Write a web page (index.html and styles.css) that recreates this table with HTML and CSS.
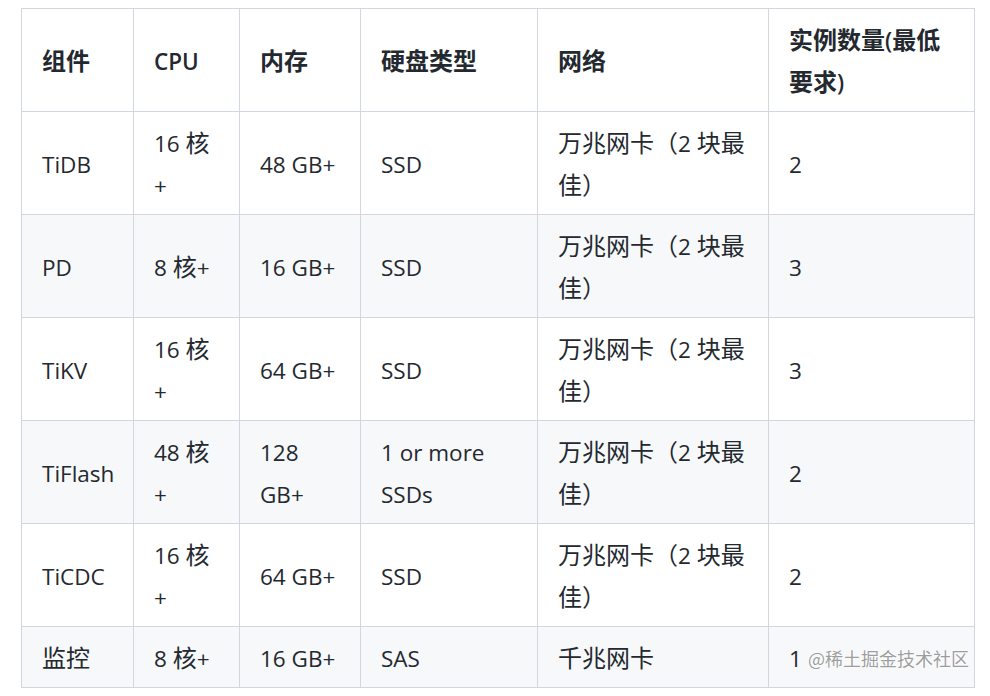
FILE: index.html
```html
<!DOCTYPE html>
<html lang="zh-CN">
<head>
<meta charset="utf-8">
<title>TiDB 硬件配置</title>
<link rel="stylesheet" href="styles.css">
</head>
<body>
<div class="page">
  <table class="spec">
    <colgroup>
      <col class="c1"><col class="c2"><col class="c3"><col class="c4"><col class="c5"><col class="c6">
    </colgroup>
    <thead>
      <tr>
        <th><span class="zh">组件</span></th>
        <th>CPU</th>
        <th><span class="zh">内存</span></th>
        <th><span class="zh">硬盘类型</span></th>
        <th><span class="zh">网络</span></th>
        <th><span class="zh">实例数量</span>(<span class="zh">最低</span><br><span class="zh">要求</span>)</th>
      </tr>
    </thead>
    <tbody>
      <tr><td>TiDB</td><td>16 <span class="zh">核</span><br>+</td><td>48 GB+</td><td>SSD</td><td><span class="zh">万兆网卡（</span>2 <span class="zh">块最</span><br><span class="zh">佳）</span></td><td>2</td></tr>
      <tr><td>PD</td><td>8 <span class="zh">核</span>+</td><td>16 GB+</td><td>SSD</td><td><span class="zh">万兆网卡（</span>2 <span class="zh">块最</span><br><span class="zh">佳）</span></td><td>3</td></tr>
      <tr><td>TiKV</td><td>16 <span class="zh">核</span><br>+</td><td>64 GB+</td><td>SSD</td><td><span class="zh">万兆网卡（</span>2 <span class="zh">块最</span><br><span class="zh">佳）</span></td><td>3</td></tr>
      <tr><td>TiFlash</td><td>48 <span class="zh">核</span><br>+</td><td>128<br>GB+</td><td>1 or more<br>SSDs</td><td><span class="zh">万兆网卡（</span>2 <span class="zh">块最</span><br><span class="zh">佳）</span></td><td>2</td></tr>
      <tr><td>TiCDC</td><td>16 <span class="zh">核</span><br>+</td><td>64 GB+</td><td>SSD</td><td><span class="zh">万兆网卡（</span>2 <span class="zh">块最</span><br><span class="zh">佳）</span></td><td>2</td></tr>
      <tr><td><span class="zh">监控</span></td><td>8 <span class="zh">核</span>+</td><td>16 GB+</td><td>SAS</td><td><span class="zh">千兆网卡</span></td><td>1</td></tr>
    </tbody>
  </table>
  <div class="watermark">@稀土掘金技术社区</div>
</div>
</body>
</html>
```

FILE: styles.css
```css
html, body {
  margin: 0;
  padding: 0;
  background: #ffffff;
}
.page {
  position: relative;
  padding: 8px 0 0 21px;
  height: 688px;
  font-family: "Open Sans", "Noto Sans CJK SC", sans-serif;
  color: #24292f;
}
.spec {
  border-collapse: collapse;
  table-layout: fixed;
  width: 953px;
  font-size: 22.5px;
  line-height: 42px;
}
.c1 { width: 112px; }
.c2 { width: 106px; }
.c3 { width: 121px; }
.c4 { width: 177px; }
.c5 { width: 231px; }
.c6 { width: 206px; }
.spec th,
.spec td {
  border: 1px solid #d0d7de;
  padding: 11px 20px 7px;
  text-align: left;
  vertical-align: middle;
  white-space: nowrap;
}
.spec th {
  font-weight: 600;
}
.spec th .zh {
  font-weight: 700;
}
.spec tbody tr:nth-child(even) {
  background: #f6f8fa;
}
.zh {
  font-family: "Noto Sans CJK SC", sans-serif;
  font-size: 24px;
  line-height: 1;
}
.watermark {
  position: absolute;
  right: 21px;
  top: 646px;
  font-family: "Noto Sans CJK SC", sans-serif;
  font-size: 18px;
  line-height: 24px;
  color: rgba(140, 140, 140, 0.85);
  text-shadow: 0 0 2px #fff, 0 0 2px #fff;
}
```
